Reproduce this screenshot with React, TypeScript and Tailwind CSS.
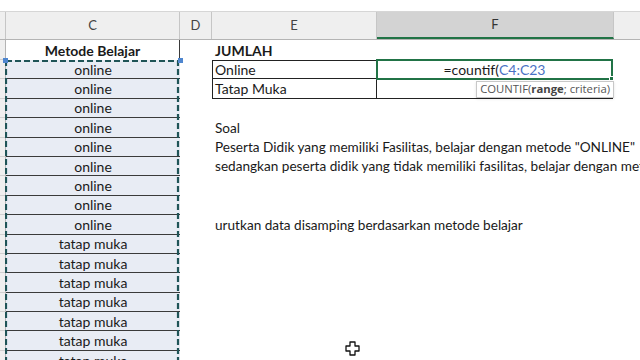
const cellFont = { fontFamily: 'Lato, "Open Sans", sans-serif' };

const metode = [
  'online', 'online', 'online', 'online', 'online', 'online', 'online', 'online', 'online',
  'tatap muka', 'tatap muka', 'tatap muka', 'tatap muka', 'tatap muka', 'tatap muka', 'tatap muka',
];

// notes by index, starting at row 6
const notes: Record<number, string> = {
  1: 'Soal',
  2: 'Peserta Didik yang memiliki Fasilitas, belajar dengan metode "ONLINE"',
  3: 'sedangkan peserta didik yang tidak memiliki fasilitas, belajar dengan metode "TATAP MUKA"',
  6: 'urutkan data disamping berdasarkan metode belajar',
};

const ColHead = ({ label, className }: { label: string; className: string }) => (
  <div className={`flex items-center justify-center text-[13px] text-[#444] border-r border-[#c6c6c6] ${className}`}>
    {label}
  </div>
);

export default function App() {
  return (
    <div className="w-[640px] h-[360px] overflow-hidden bg-white relative text-[#1a1a1a]" style={cellFont}>
      {/* strip above the column headers */}
      <div className="h-[12px] bg-white border-b border-[#d6d6d6]" />

      {/* column headers */}
      <div className="flex h-[28px] bg-[#efefef] border-b border-[#b4b4b4]">
        <ColHead label="" className="w-[6px]" />
        <ColHead label="C" className="w-[174px]" />
        <ColHead label="D" className="w-[32px]" />
        <ColHead label="E" className="w-[165px]" />
        <div className="w-[237px] flex items-center justify-center text-[13px] text-[#333] bg-[#d3d3d3] border-b-2 border-[#217346] border-r border-r-[#c6c6c6]">
          F
        </div>
        <div className="flex-1" />
      </div>

      <div className="flex">
        {/* row headers (cut off) */}
        <div className="w-[6px] shrink-0 bg-[#efefef] border-r border-[#b4b4b4] flex flex-col">
          <div className="h-[20px] border-b border-[#d0d0d0]" />
          {metode.map((_, i) => (
            <div key={i} className="h-[19.4px] border-b border-[#d0d0d0]" />
          ))}
        </div>

        {/* column C */}
        <div className="w-[174px] shrink-0 flex flex-col">
          <div className="h-[20px] flex items-center justify-center font-bold text-[14px] border-r border-[#3a3a3a]">
            Metode Belajar
          </div>
          <div className="relative">
            {metode.map((m, i) => (
              <div
                key={i}
                className="h-[19.4px] flex items-center justify-center text-[14px] bg-[#e8ecf4] border-b border-[#3a3a3a]"
              >
                {m}
              </div>
            ))}
            {/* copy selection marching ants */}
            <svg className="absolute -left-[1px] top-0 w-[175px] h-[320px]" viewBox="0 0 175 320">
              <rect x="1" y="1" width="172" height="330" fill="none" stroke="#1f5457" strokeWidth="2.2" strokeDasharray="6 3" />
            </svg>
            <span className="absolute -left-[3px] -top-[2px] w-[5px] h-[5px] bg-[#4f86cf]" />
            <span className="absolute -right-[3px] -top-[2px] w-[5px] h-[5px] bg-[#4f86cf]" />
          </div>
        </div>

        {/* columns D, E, F */}
        <div className="flex-1 flex flex-col">
          <div className="h-[20px] flex">
            <div className="w-[32px]" />
            <div className="flex items-center pl-[3px] font-bold text-[14px]">JUMLAH</div>
          </div>

          <div className="h-[19.4px] flex">
            <div className="w-[32px]" />
            <div className="w-[165px] flex items-center pl-[2px] text-[14px] border border-[#222]">Online</div>
            <div className="w-[237px] -ml-[1px] -mt-[1px] h-[21px] relative flex items-center justify-center text-[14px] border-2 border-[#217346]">
              <span>=countif(</span>
              <span className="text-[#4a72c4]">C4:C23</span>
              <span className="absolute -right-[3px] -bottom-[3px] w-[5px] h-[5px] bg-[#217346] border border-white" />
            </div>
          </div>

          <div className="h-[19.4px] flex">
            <div className="w-[32px]" />
            <div className="w-[165px] flex items-center pl-[2px] text-[14px] border-x border-b border-[#222]">Tatap Muka</div>
            <div className="w-[237px] -ml-[1px] relative border-b border-[#222]">
              <div
                className="absolute right-[-1px] top-[2px] h-[17px] px-[3px] flex items-center bg-white border border-[#c8c8c8] text-[11.3px] text-[#555] whitespace-nowrap shadow-sm"
                style={{ fontFamily: '"Open Sans", Lato, sans-serif' }}
              >
                COUNTIF(<b className="text-[#444]">range</b>; criteria)
              </div>
            </div>
          </div>

          {Array.from({ length: 10 }).map((_, i) => (
            <div key={i} className="h-[19.4px] flex">
              <div className="w-[32px] shrink-0" />
              <div className="flex items-center pl-[3px] text-[13.6px] whitespace-nowrap">{notes[i] ?? ''}</div>
            </div>
          ))}
        </div>
      </div>

      {/* excel cell cursor */}
      <svg className="absolute left-[345px] top-[341px] w-[15px] h-[15px]" viewBox="0 0 15 15">
        <path
          d="M5 1h5v4h4v5h-4v4H5v-4H1V5h4z"
          fill="#fff"
          stroke="#111"
          strokeWidth="1.3"
          strokeLinejoin="round"
        />
      </svg>
    </div>
  );
}
